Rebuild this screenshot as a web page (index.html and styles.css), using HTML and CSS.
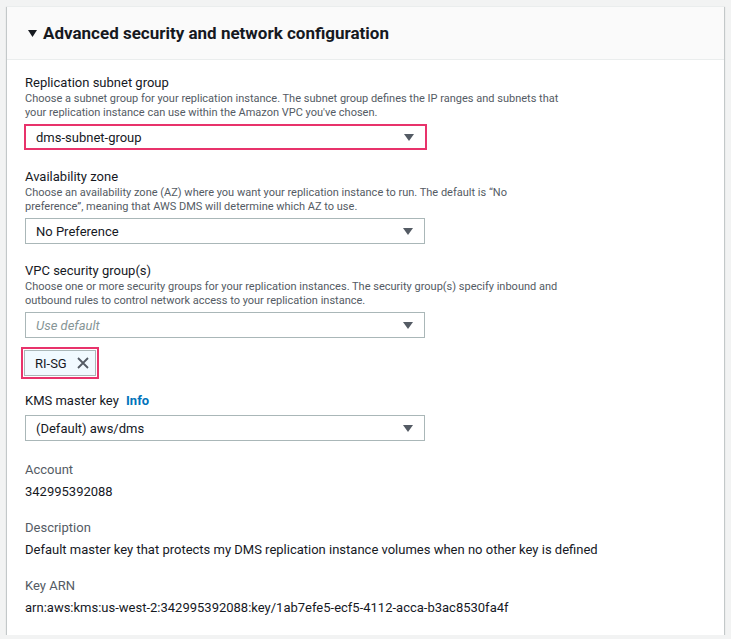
FILE: index.html
```html
<!DOCTYPE html>
<html lang="en">
<head>
<meta charset="utf-8">
<title>Advanced security and network configuration</title>
<link rel="stylesheet" href="styles.css">
</head>
<body>
<section class="card">
  <header class="card-header">
    <svg class="caret" width="9" height="7" viewBox="0 0 9 7"><path d="M0 0 H9 L4.5 7 Z" fill="#16191f"/></svg>
    <h2 class="title">Advanced security and network configuration</h2>
  </header>
  <div class="card-body">
    <div class="field">
      <div class="label">Replication subnet group</div>
      <div class="desc">Choose a subnet group for your replication instance. The subnet group defines the IP ranges and subnets that<br>your replication instance can use within the Amazon VPC you've chosen.</div>
      <div class="select highlight"><span>dms-subnet-group</span><i class="arrow"></i></div>
    </div>
    <div class="field">
      <div class="label">Availability zone</div>
      <div class="desc">Choose an availability zone (AZ) where you want your replication instance to run. The default is “No<br>preference”, meaning that AWS DMS will determine which AZ to use.</div>
      <div class="select"><span>No Preference</span><i class="arrow"></i></div>
    </div>
    <div class="field vpc">
      <div class="label">VPC security group(s)</div>
      <div class="desc">Choose one or more security groups for your replication instances. The security group(s) specify inbound and<br>outbound rules to control network access to your replication instance.</div>
      <div class="select"><span class="placeholder">Use default</span><i class="arrow"></i></div>
      <div class="token-wrap">
        <div class="token"><span>RI-SG</span>
          <svg width="12" height="12" viewBox="0 0 12 12"><path d="M1 1 L11 11 M11 1 L1 11" stroke="#545b64" stroke-width="1.8"/></svg>
        </div>
      </div>
    </div>
    <div class="field kms">
      <div class="label">KMS master key <a class="info" href="#">Info</a></div>
      <div class="select"><span>(Default) aws/dms</span><i class="arrow"></i></div>
    </div>
    <div class="kv first">
      <div class="k">Account</div>
      <div class="v">342995392088</div>
    </div>
    <div class="kv">
      <div class="k">Description</div>
      <div class="v">Default master key that protects my DMS replication instance volumes when no other key is defined</div>
    </div>
    <div class="kv">
      <div class="k">Key ARN</div>
      <div class="v">arn:aws:kms:us-west-2:342995392088:key/1ab7efe5-ecf5-4112-acca-b3ac8530fa4f</div>
    </div>
  </div>
</section>
</body>
</html>
```
FILE: styles.css
```css
html, body {
  margin: 0;
  padding: 0;
}
body {
  background: #f2f3f3;
  font-family: Roboto, "Liberation Sans", sans-serif;
  color: #16191f;
  padding: 6px 7px 0 7px;
}
.card {
  width: 717px;
  background: #ffffff;
  border-top: 1px solid #eaeded;
  box-shadow: 0 1px 1px 0 rgba(0, 28, 36, 0.3), 1px 1px 1px 0 rgba(0, 28, 36, 0.15), -1px 1px 1px 0 rgba(0, 28, 36, 0.15);
}
.card-header {
  height: 52px;
  background: #fafafa;
  border-bottom: 1px solid #eaeded;
  display: flex;
  align-items: center;
  padding-left: 21px;
  gap: 6px;
}
.caret { margin-top: 1px; }
.title {
  margin: 0;
  font-size: 17px;
  font-weight: 700;
  color: #16191f;
}
.card-body {
  padding: 14px 18px 16px 18px;
  display: flex;
  flex-direction: column;
}
.field {
  display: flex;
  flex-direction: column;
  margin-bottom: 18px;
}
.field.vpc { margin-bottom: 13px; }
.label {
  font-size: 13px;
  line-height: 18px;
  color: #16191f;
}
.desc {
  font-size: 11px;
  line-height: 14px;
  color: #545b64;
  margin-bottom: 4px;
}
.select {
  width: 400px;
  height: 26px;
  box-sizing: border-box;
  border: 1px solid #aab7b8;
  display: flex;
  align-items: center;
  justify-content: space-between;
  padding: 0 11px 0 10px;
  font-size: 13px;
  color: #16191f;
}
.select.highlight {
  border: 2px solid #e8336b;
  width: 403px;
  margin-left: -1px;
  padding-left: 10px;
}
.placeholder {
  color: #879596;
  font-style: italic;
}
.arrow {
  width: 0;
  height: 0;
  border-left: 5px solid transparent;
  border-right: 5px solid transparent;
  border-top: 7px solid #545b64;
}
.kms .label { margin-bottom: 5px; }
.token-wrap {
  align-self: flex-start;
  margin-top: 9px;
  margin-left: -4px;
  border: 2px solid #e8336b;
  padding: 1px;
}
.token {
  display: flex;
  align-items: center;
  gap: 10px;
  height: 26px;
  box-sizing: border-box;
  padding: 0 6px 0 10px;
  background: #f1faff;
  border: 1px solid #aab7b8;
  font-size: 13px;
}
.info {
  color: #0073bb;
  font-weight: 700;
  text-decoration: none;
  margin-left: 4px;
}
.kv {
  display: flex;
  flex-direction: column;
  margin-top: 14px;
}
.kv.first { margin-top: 0; }
.k {
  font-size: 13px;
  line-height: 22px;
  color: #545b64;
}
.v {
  font-size: 13px;
  line-height: 22px;
  color: #16191f;
}
```
